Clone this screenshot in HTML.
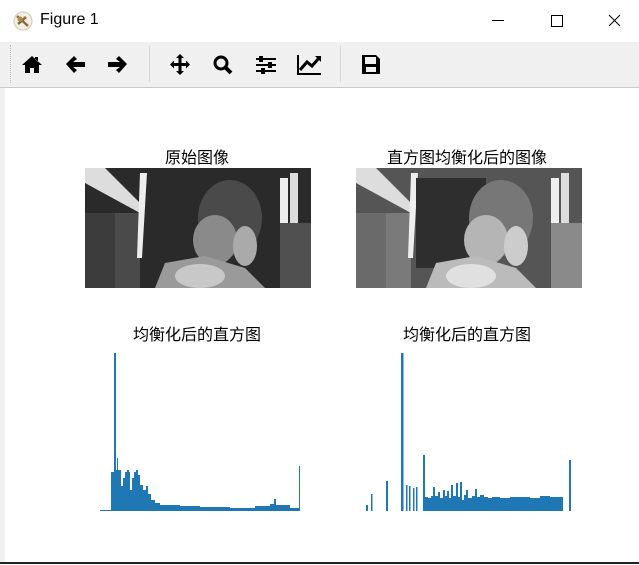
<!DOCTYPE html>
<html><head><meta charset="utf-8"><style>
body{margin:0;width:639px;height:565px;overflow:hidden;background:#fff;font-family:"Liberation Sans","Noto Sans CJK SC",sans-serif;position:relative}
.t{position:absolute;font-size:16px;color:#000;white-space:nowrap}
</style></head><body>
<div style="position:absolute;left:0;top:0;width:639px;height:42px;background:#fff"></div>
<svg style="position:absolute;left:13px;top:11px" width="20" height="20" viewBox="0 0 20 20"><circle cx="10" cy="10" r="9" fill="#f4eee4" stroke="#cfc7b8"/><path d="M4 5 L15 15 M5 13 L13 6" stroke="#8a6a3a" stroke-width="2.5"/><circle cx="7" cy="8" r="2.5" fill="#b08a4a"/></svg>
<div class="t" style="left:40px;top:11px;font-size:16px">Figure 1</div>
<svg style="position:absolute;left:480px;top:0" width="159" height="42"><path d="M12 20.5h12" stroke="#000"/><rect x="71.5" y="15.5" width="11" height="11" fill="none" stroke="#000"/><path d="M129 15l11 11M140 15l-11 11" stroke="#000"/></svg>
<div style="position:absolute;left:0;top:42px;width:639px;height:45px;background:#f0f0f0"></div>
<div style="position:absolute;left:0;top:87px;width:639px;height:1px;background:#c8c8c8"></div>
<div style="position:absolute;left:10px;top:45px;width:1px;height:38px;border-left:1px dotted #bbb"></div>
<div style="position:absolute;left:149px;top:46px;width:1px;height:36px;background:#d8d8d8"></div>
<div style="position:absolute;left:340px;top:46px;width:1px;height:36px;background:#d8d8d8"></div>
<svg style="position:absolute;left:0;top:42px" width="400" height="45" fill="#000">
<path d="M32 14 L22 23 h3 v8 h5 v-5 h4 v5 h5 v-8 h3 Z M35 15h3v5l-3-3z"/>
<path d="M66 22 L74 14 L77 17 L73 20 H85 V25 H73 L77 28 L74 31 Z"/>
<path d="M127 22 L119 14 L116 17 L120 20 H108 V25 H120 L116 28 L119 31 Z"/>
<path d="M180 12 L184 16 H181.5 V21 H186 V18.5 L190 22.5 L186 26.5 V24 H181.5 V29 H184 L180 33 L176 29 H178.5 V24 H174 V26.5 L170 22.5 L174 18.5 V21 H178.5 V16 H176 Z"/>
<circle cx="221" cy="21" r="6" fill="none" stroke="#000" stroke-width="3"/><path d="M225 25 L231 31" stroke="#000" stroke-width="4"/>
<path d="M256 16h20v2h-20zM256 22h20v2h-20zM256 28h20v2h-20z"/><rect x="259" y="14" width="4" height="6"/><rect x="268" y="20" width="4" height="6"/><rect x="261" y="26" width="4" height="6"/>
<path d="M298 13v19h23" fill="none" stroke="#000" stroke-width="2"/><path d="M300 28 L307 20 L312 24 L319 16" fill="none" stroke="#000" stroke-width="3"/><path d="M315 14h6v6z"/>
<path d="M362 13h14l4 4v15h-18z M365 15v7h11v-7z M366 25h10v5h-10z" fill-rule="evenodd"/>
</svg>
<div style="position:absolute;left:0;top:88px;width:5px;height:475px;background:#f0f0f0"></div>
<div style="position:absolute;left:0;top:562px;width:639px;height:2px;background:#222"></div>
<div class="t" style="left:165px;top:144px">原始图像</div>
<div class="t" style="left:387px;top:144px">直方图均衡化后的图像</div>
<div class="t" style="left:133px;top:321px">均衡化后的直方图</div>
<div class="t" style="left:403px;top:321px">均衡化后的直方图</div>
<svg style="position:absolute;left:85px;top:168px" width="226" height="120">
<rect width="226" height="120" fill="#2a2a2a"/>
<polygon points="0,0 20,0 60,40 55,45 0,15" fill="#ddd"/>
<rect x="0" y="45" width="55" height="75" fill="#3c3c3c"/><rect x="30" y="45" width="25" height="75" fill="#4a4a4a"/>
<polygon points="55,5 62,5 57,90 52,90" fill="#eee"/>
<rect x="195" y="10" width="8" height="45" fill="#eee"/><rect x="205" y="5" width="8" height="50" fill="#ddd"/>
<rect x="195" y="55" width="31" height="65" fill="#505050"/>
<ellipse cx="145" cy="50" rx="32" ry="38" fill="#4a4a4a"/>
<ellipse cx="130" cy="72" rx="22" ry="25" fill="#8a8a8a"/>
<ellipse cx="160" cy="78" rx="12" ry="20" fill="#aaa"/>
<polygon points="70,120 80,95 120,88 160,100 180,120" fill="#9a9a9a"/>
<ellipse cx="115" cy="108" rx="25" ry="12" fill="#c8c8c8"/>
</svg>
<svg style="position:absolute;left:356px;top:168px" width="226" height="120">
<rect width="226" height="120" fill="#555"/>
<polygon points="0,0 20,0 60,40 55,45 0,15" fill="#ddd"/>
<rect x="0" y="45" width="55" height="75" fill="#6a6a6a"/><rect x="30" y="45" width="25" height="75" fill="#7a7a7a"/>
<polygon points="55,5 62,5 57,90 52,90" fill="#eee"/>
<rect x="60" y="10" width="70" height="90" fill="#2e2e2e"/>
<rect x="195" y="10" width="8" height="45" fill="#eee"/><rect x="205" y="5" width="8" height="50" fill="#ddd"/>
<rect x="195" y="55" width="31" height="65" fill="#8a8a8a"/>
<ellipse cx="145" cy="50" rx="32" ry="38" fill="#777"/>
<ellipse cx="130" cy="72" rx="22" ry="25" fill="#b5b5b5"/>
<ellipse cx="160" cy="78" rx="12" ry="20" fill="#ccc"/>
<polygon points="70,120 80,95 120,88 160,100 180,120" fill="#bbb"/>
<ellipse cx="115" cy="108" rx="25" ry="12" fill="#e0e0e0"/>
</svg>
<svg style="position:absolute;left:0;top:0" width="639" height="565" fill="#1f77b4">
<path d="M100 511 V510 H111 V472 H114 V353 H116 V470 H117 V458 H118 V470 H121 V486 H123 V478 H125 V472 H127 V470 H129 V472 H130 V490 H132 V478 H134 V472 H136 V470 H138 V475 H140 V485 H143 V490 H146 V486 H148 V494 H151 V500 H155 V503 H160 V505 H180 V506 H200 V507 H230 V508 H255 V506 H270 V504 H274 V499 H276 V505 H290 V508 H299 V466 H300 V511 Z"/>
<rect x="366" y="505" width="2" height="6"/><rect x="371" y="494" width="1.5" height="17"/><rect x="386" y="481" width="2" height="30"/><rect x="401" y="353" width="2.5" height="158"/>
<rect x="406" y="485" width="1.5" height="26"/><rect x="409" y="486" width="1.5" height="25"/><rect x="413" y="488" width="1.5" height="23"/><rect x="416" y="487" width="1.5" height="24"/>
<rect x="423" y="455" width="2" height="56"/>
<path d="M425 511 V497 H428 V498 H431 V496 H433 V487 H435 V496 H438 V492 H440 V498 H443 V490 H445 V496 H447 V491 H449 V498 H451 V485 H453 V496 H456 V483 H458 V497 H460 V482 H462 V500 H464 V495 H466 V490 H468 V498 H472 V496 H475 V489 H477 V497 H480 V495 H484 V497 H488 V498 H492 V497 H500 V498 H510 V497 H530 V498 H540 V496 H550 V497 H563 V511 Z"/>
<rect x="569" y="460" width="2" height="51"/>
</svg>
</body></html>
